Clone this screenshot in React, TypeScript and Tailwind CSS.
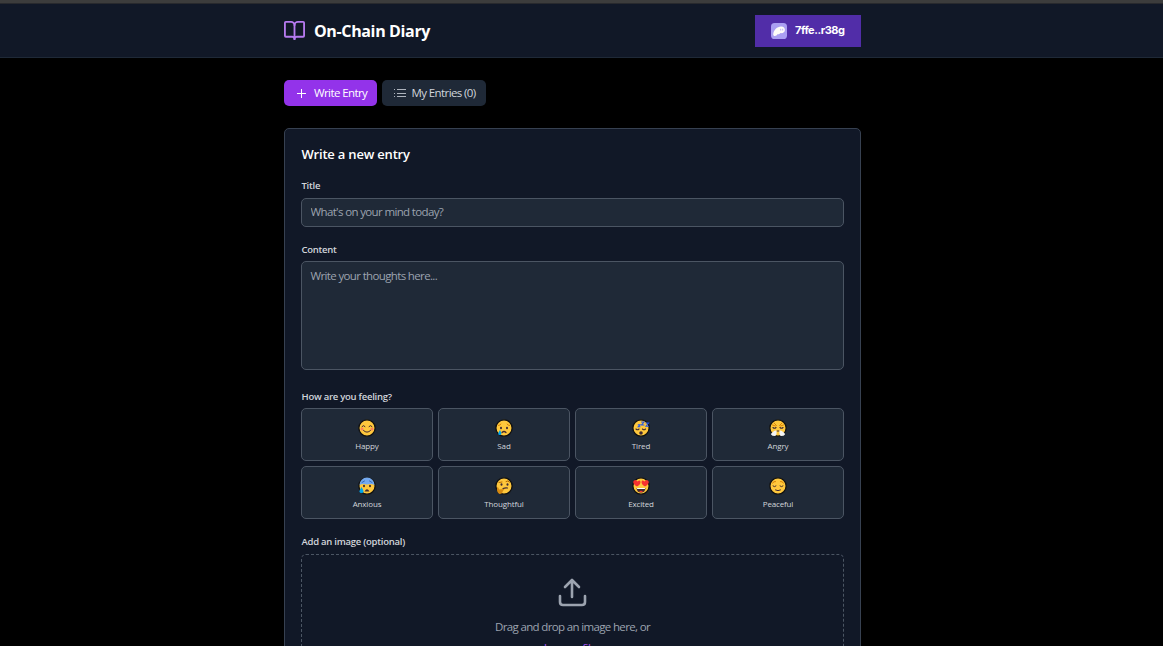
import type { ReactNode } from 'react';

const outline = '#111';

function Face({ children }: { children: ReactNode }) {
  return (
    <svg viewBox="0 0 36 36" className="h-[18px] w-[18px]" fill="none" strokeLinecap="round">
      <circle cx="18" cy="18" r="16.3" fill="#ffc83d" stroke={outline} strokeWidth="2.6" />
      {children}
    </svg>
  );
}

const moods: { name: string; face: ReactNode }[] = [
  {
    name: 'Happy',
    face: (
      <Face>
        <circle cx="8" cy="20" r="3" fill="#ff8257" />
        <circle cx="28" cy="20" r="3" fill="#ff8257" />
        <path d="M8 15q3-4 6 0M22 15q3-4 6 0M11 23q7 7 14 0" stroke="#402a32" strokeWidth="2" />
      </Face>
    ),
  },
  {
    name: 'Sad',
    face: (
      <Face>
        <path d="M7 13q3 0 5-3M29 13q-3 0-5-3" stroke="#d67d00" strokeWidth="2" />
        <ellipse cx="12" cy="18" rx="2" ry="2.6" fill="#402a32" />
        <ellipse cx="24" cy="18" rx="2" ry="2.6" fill="#402a32" />
        <path d="M14 27q4-4 8 0" stroke="#402a32" strokeWidth="2.4" />
        <path d="M10 22q-7 10-.5 10t.5-10" fill="#00a6ed" />
      </Face>
    ),
  },
  {
    name: 'Tired',
    face: (
      <Face>
        <path d="M8 20q3 3 6 0M21 20q3 3 6 0" stroke="#402a32" strokeWidth="2.2" />
        <ellipse cx="18" cy="28" rx="3.6" ry="3.4" fill="#402a32" />
        <path d="M12.500 11.500h3.500l-3.500 4h3.500M19 6h5l-5 6h5M28 8h5l-5 6.500h5" stroke="#2456e8" strokeWidth="2.200" />
      </Face>
    ),
  },
  {
    name: 'Angry',
    face: (
      <Face>
        <path d="M10 8l5 5M26 8l-5 5M7 12l6 2M29 12l-6 2" stroke="#d67d00" strokeWidth="1.800" />
        <path d="M8 17q3 3 6 0M22 17q3 3 6 0M16 24h4" stroke="#402a32" strokeWidth="2.2" />
        <path d="M15 23q-5-1-7 3-4 1-4 5 2 3 8 3 4-1 3-11ZM21 23q5-1 7 3 4 1 4 5-2 3-8 3-4-1-3-11Z" fill="#f4f4f4" />
      </Face>
    ),
  },
  {
    name: 'Anxious',
    face: (
      <Face>
        <path d="M3 16A15 15 0 0 1 33 16Q26 13 18 15 9 13 3 16Z" fill="#74a9ef" />
        <path d="M8 11l5-3M28 11l-5-3" stroke="#3168b8" strokeWidth="2" />
        <ellipse cx="12" cy="18" rx="2" ry="2.7" fill="#402a32" />
        <ellipse cx="24" cy="18" rx="2" ry="2.7" fill="#402a32" />
        <path d="M13 29q5-9 10 0Z" fill="#402a32" />
        <path d="M7 20q-8 12 0 12t0-12" fill="#00a6ed" />
      </Face>
    ),
  },
  {
    name: 'Thoughtful',
    face: (
      <Face>
        <path d="M8 11l6-1M22 9q4-3 7 1" stroke="#b86a00" strokeWidth="2" />
        <ellipse cx="13" cy="15" rx="2" ry="2.6" fill="#402a32" />
        <ellipse cx="25" cy="15" rx="2" ry="2.6" fill="#402a32" />
        <path d="M16 23q5-2 9-1" stroke="#402a32" strokeWidth="2.2" />
        <path d="M4 21q3-2 4 4l10-1q2 2-2 3-1 7-7 7-6-3-5-13Z" fill="#d68a12" />
      </Face>
    ),
  },
  {
    name: 'Excited',
    face: (
      <Face>
        <path d="M10 19Q-1 12 4 7q4-3 7 2 5-4 6 1 0 5-7 9ZM26 19q11-7 6-12-4-3-7 2-5-4-6 1 0 5 7 9Z" fill="#f8312f" />
        <path d="M9 22h18q-1 9-9 9t-9-9Z" fill="#402a32" />
        <path d="M11 23h14" stroke="#fff" strokeWidth="2.4" />
        <path d="M14 29q4-3 8 0-4 3-8 0Z" fill="#f8312f" />
      </Face>
    ),
  },
  {
    name: 'Peaceful',
    face: (
      <Face>
        <path d="M7 12q3-4 6-3M29 12q-3-4-6-3" stroke="#d67d00" strokeWidth="2" />
        <path d="M8 18q3 3 6 0M22 18q3 3 6 0M13 26q5 3 10 0" stroke="#402a32" strokeWidth="2" />
      </Face>
    ),
  },
];

function BookIcon() {
  return (
    <svg viewBox="0 0 24 24" className="h-[23px] w-[23px] -translate-x-px" fill="none" stroke="#b77af0" strokeWidth="1.9" strokeLinecap="round" strokeLinejoin="round">
      <path d="M12 6v15" />
      <path d="M3 18.500a1 1 0 0 1-1-1V4a1 1 0 0 1 1-1h5.500A3.500 3.500 0 0 1 12 6.500 3.500 3.500 0 0 1 15.500 3H21a1 1 0 0 1 1 1v13.500a1 1 0 0 1-1 1h-6.500A2.500 2.500 0 0 0 12 21a2.500 2.500 0 0 0-2.500-2.500z" />
    </svg>
  );
}

function WalletIcon() {
  return (
    <svg viewBox="0 0 16 16" className="h-4 w-4 shrink-0">
      <rect width="16" height="16" rx="3.6" fill="#ab9ff2" />
      <path d="M2.200 11.200C2.600 7 6.200 3.600 10 3.500c2.700 0 4 1.800 3.900 3.600-.2 2.600-2.400 3.500-4.300 3-.9 1.100-1.900 1.500-2.800.9-.8 1.200-1.900 2-3 2-.9 0-1.700-.7-1.600-1.800Z" fill="#fffdf8" />
      <path d="M9.700 6.200v.9M11.700 6.200v.9" stroke="#ab9ff2" strokeWidth=".8" strokeLinecap="round" />
    </svg>
  );
}

function Label({ children, className }: { children: ReactNode; className: string }) {
  return <div className={`h-[14px] pl-[0.5px] text-[9.5px] leading-[14px] font-semibold tracking-[-0.25px] whitespace-nowrap text-[#d1d5db] ${className}`}>{children}</div>;
}

export default function App() {
  return (
    <div className="flex h-[646px] flex-col overflow-hidden bg-black font-['Open_Sans','Noto_Sans',sans-serif]">
      <div className="h-[4px] shrink-0 border-b border-[#28292d] bg-[#3c3c3c]" />
      <header className="h-[54px] shrink-0 border-b border-[#1f2937] bg-[#111827]">
        <div className="mx-auto flex h-[53px] w-[577px] -translate-x-[9px] items-center justify-between">
          <div className="flex items-center gap-[7px]">
            <BookIcon />
            <h1 className="text-[16px] leading-6 font-bold tracking-[-0.36px] whitespace-nowrap text-white">On-Chain Diary</h1>
          </div>
          <button className="flex h-8 w-[106px] items-center gap-2 bg-[#512da8] pl-4 font-['Inter',sans-serif] text-[11px] font-bold tracking-[-0.45px] whitespace-nowrap text-white">
            <WalletIcon />
            7ffe..r38g
          </button>
        </div>
      </header>
      <main className="mx-auto w-[577px] -translate-x-[9px] pt-[22px]">
        <nav className="flex gap-[5px] text-[11.5px] leading-[26px] tracking-[-0.6px] whitespace-nowrap">
          <button className="flex h-[26px] w-[93px] items-center gap-[7px] rounded-[5px] bg-[#9333ea] pl-[12px] text-white">
            <svg viewBox="0 0 11 11" className="h-[11px] w-[11px]" stroke="#fff" strokeWidth="1"><path d="M5.500 1v9M1 5.500h9" /></svg>
            Write Entry
          </button>
          <button className="flex h-[26px] w-[104px] items-center gap-[5.5px] rounded-[5px] bg-[#1f2937] pl-[12px] text-[#d1d5db]">
            <svg viewBox="0 0 12 11" className="h-[11px] w-[12px]" stroke="#aeb4bd" strokeWidth="1"><path d="M0 1.500h1M3 1.500h9M0 5.500h1M3 5.500h9M0 8.500h1M3 8.500h9" /></svg>
            My Entries (0)
          </button>
        </nav>
        <section className="mt-[22px] h-[620px] rounded-[5px] border border-[#374151] bg-[#111827] px-4 pt-[15px]">
          <h2 className="h-[20px] pl-[0.5px] text-[13px] leading-[20px] font-semibold tracking-[-0.2px] whitespace-nowrap text-white">Write a new entry</h2>
          <Label className="mt-[15px]">Title</Label>
          <input className="mt-[5px] block h-[29px] w-[543px] rounded-[5px] border border-[#4b5563] bg-[#1f2937] px-[8.5px] pb-[2px] text-[11.5px] tracking-[-0.64px] text-white outline-none placeholder:text-[#9ca3af]" placeholder="What's on your mind today?" />
          <Label className="mt-[16px]">Content</Label>
          <textarea className="mt-[4px] block h-[109px] w-[543px] resize-none rounded-[5px] border border-[#4b5563] bg-[#1f2937] px-[8.5px] py-[5px] text-[11.5px] leading-[17px] tracking-[-0.64px] text-white outline-none placeholder:text-[#9ca3af]" placeholder="Write your thoughts here..." />
          <Label className="mt-[20px]">How are you feeling?</Label>
          <div className="mt-[4px] grid w-[543px] grid-cols-4 gap-[5px]">
            {moods.map((mood) => (
              <button key={mood.name} className="flex h-[53px] flex-col items-center rounded-[5px] border border-[#4b5563] bg-[#1f2937] pt-[10px]">
                {mood.face}
                <span className="mt-[3px] text-[8px] leading-[11px] tracking-[-0.15px] whitespace-nowrap text-[#d1d5db]">{mood.name}</span>
              </button>
            ))}
          </div>
          <Label className="mt-[16px]">Add an image (optional)</Label>
          <div className="mt-[5px] flex h-[140px] w-[543px] flex-col items-center rounded-[5px] border border-dashed border-[#4b5563] pt-[20px] text-[11.5px] leading-[17px] tracking-[-0.65px] whitespace-nowrap text-[#9ca3af]">
            <svg viewBox="0 0 34 34" className="h-[34px] w-[34px] -translate-x-px" fill="none" stroke="#9ca3af" strokeWidth="2.600" strokeLinecap="round" strokeLinejoin="round">
              <path d="M17 22V5M10 12l7-7 7 7M5 21v6q0 3 3 3h19q3 0 3-3v-6" />
            </svg>
            <div className="mt-[9px]">Drag and drop an image here, or</div>
            <button className="mt-[4px] tracking-[-0.6px] text-[#a855f7]">browse files</button>
          </div>
        </section>
      </main>
    </div>
  );
}
